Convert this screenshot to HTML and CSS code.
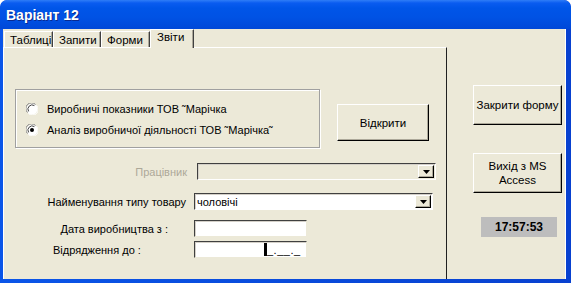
FILE: index.html
```html
<!DOCTYPE html>
<html>
<head>
<meta charset="utf-8">
<link rel="stylesheet" href="styles.css">
</head>
<body>
<div class="window">
  <div class="titlebar"><span class="title">Варіант 12</span></div>
  <div class="client">
    <div class="main">
      <div class="tabs">
        <div class="tab">Таблиці</div>
        <div class="tab">Запити</div>
        <div class="tab">Форми</div>
        <div class="tab active">Звіти</div>
      </div>
      <div class="panel">
        <div class="top-row">
          <div class="group">
            <div class="opt"><svg class="radio" width="12" height="12" viewBox="0 0 12 12"><circle cx="6" cy="6" r="5.5" fill="#fff"/><path d="M1.5 9.5A5.5 5.5 0 0 1 9.5 1.5" stroke="#808080" fill="none"/><path d="M2.6 8.4A4.2 4.2 0 0 1 8.4 2.6" stroke="#404040" fill="none"/><path d="M10.5 2.5A5.5 5.5 0 0 1 2.5 10.5" stroke="#fff" fill="none"/></svg><span>Виробничі показники ТОВ ˜Марічка</span></div>
            <div class="opt"><svg class="radio" width="12" height="12" viewBox="0 0 12 12"><circle cx="6" cy="6" r="5.5" fill="#fff"/><path d="M1.5 9.5A5.5 5.5 0 0 1 9.5 1.5" stroke="#808080" fill="none"/><path d="M2.6 8.4A4.2 4.2 0 0 1 8.4 2.6" stroke="#404040" fill="none"/><path d="M10.5 2.5A5.5 5.5 0 0 1 2.5 10.5" stroke="#fff" fill="none"/><circle cx="6" cy="6" r="2" fill="#000"/></svg><span>Аналіз виробничої діяльності ТОВ ˜Марічка˜</span></div>
          </div>
          <div class="btn open-btn">Відкрити</div>
        </div>
        <div class="row row-worker">
          <span class="label disabled">Працівник</span>
          <div class="combo combo-disabled"><span class="combo-text"></span><span class="drop"><svg width="7" height="4" viewBox="0 0 7 4"><path d="M0 0H7L3.5 4Z" fill="#000"/></svg></span></div>
        </div>
        <div class="row row-type">
          <span class="label">Найменування типу товару</span>
          <div class="combo combo-white"><span class="combo-text">чоловічі</span><span class="drop"><svg width="7" height="4" viewBox="0 0 7 4"><path d="M0 0H7L3.5 4Z" fill="#000"/></svg></span></div>
        </div>
        <div class="row row-date">
          <span class="label">Дата виробництва з :</span>
          <div class="textbox"></div>
        </div>
        <div class="row row-until">
          <span class="label">Відрядження до :</span>
          <div class="textbox mask"><span class="caret"></span><span class="masktext">_.__._</span></div>
        </div>
      </div>
    </div>
    <div class="side">
      <div class="btn side-btn close-btn">Закрити форму</div>
      <div class="btn side-btn exit-btn">Вихід з MS<br>Access</div>
      <div class="clock">17:57:53</div>
    </div>
  </div>
</div>
</body>
</html>
```
FILE: styles.css
```css
html, body {
  margin: 0;
  padding: 0;
  background: #fff;
}
body {
  font-family: "Liberation Sans", Arial, sans-serif;
  font-size: 11px;
  color: #000;
}
.window {
  width: 571px;
  height: 283px;
  box-sizing: border-box;
  background: linear-gradient(to right, #0a55e8 0, #0a55e8 3px, #0841d0 100%);
  padding: 0 5px 4px 3px;
  display: flex;
  flex-direction: column;
  border-radius: 7px 7px 0 0;
  overflow: hidden;
}
.titlebar {
  height: 29px;
  flex: none;
  margin: 0 -5px 0 -3px;
  background: linear-gradient(to bottom, #2f7df7 0, #0a5cf0 3px, #0055e8 8px, #0052e4 60%, #0048d8 100%);
  display: flex;
  align-items: center;
  padding-left: 6px;
  border-radius: 7px 7px 0 0;
}
.title {
  color: #fff;
  font-weight: bold;
  font-size: 14px;
  font-family: "Liberation Sans", sans-serif;
  text-shadow: 1px 1px 0 #0a2a90;
  margin-top: 1px;
}
.client {
  flex: 1;
  display: flex;
  background: #ece9d8;
}
.main {
  width: 444px;
  display: flex;
  flex-direction: column;
}
.tabs {
  height: 18px;
  display: flex;
  align-items: flex-end;
  padding-left: 1px;
  flex: none;
}
.tab {
  height: 16px;
  box-sizing: border-box;
  border-top: 1px solid #fff;
  border-left: 1px solid #fff;
  border-right: 1px solid #404040;
  box-shadow: inset -1px 0 #aca899;
  padding: 2px 4px 0 5px;
  line-height: 13px;
  font-size: 11.5px;
  background: #ece9d8;
  white-space: nowrap;
}
.tab:nth-child(1) { width: 49px; }
.tab:nth-child(2) { width: 48px; }
.tab:nth-child(3) { width: 49px; }
.tab.active {
  width: 44px;
  height: 19px;
  margin-bottom: -1px;
  position: relative;
  padding-top: 1px;
  padding-left: 6px;
}
.panel {
  flex: 1;
  box-sizing: border-box;
  border-top: 1px solid #fff;
  border-left: 1px solid #fff;
  border-right: 1px solid #202020;
  padding: 41px 0 0 11px;
  display: flex;
  flex-direction: column;
}
.top-row {
  display: flex;
  align-items: flex-start;
}
.group {
  width: 305px;
  height: 59px;
  box-sizing: border-box;
  border: 1px solid #a0a0a0;
  box-shadow: inset 1px 1px #fff, 1px 1px #fff;
  padding: 12px 0 0 10px;
  display: flex;
  flex-direction: column;
  gap: 7px;
}
.opt {
  display: flex;
  align-items: center;
  gap: 9px;
  height: 14px;
  white-space: nowrap;
}
.radio { flex: none; }
.btn {
  box-sizing: border-box;
  background: #ece9d8;
  border-top: 1px solid #fff;
  border-left: 1px solid #fff;
  border-right: 1px solid #000;
  border-bottom: 1px solid #000;
  box-shadow: inset -1px -1px #aca899;
  display: flex;
  align-items: center;
  justify-content: center;
  text-align: center;
  line-height: 14px;
  font-size: 11.5px;
}
.open-btn {
  width: 92px;
  height: 37px;
  margin: 15px 0 0 17px;
}
.row {
  display: flex;
  align-items: center;
  height: 17px;
}
.label {
  white-space: nowrap;
  text-align: right;
  box-sizing: border-box;
}
.disabled {
  color: #aca899;
}
.row-worker { margin-top: 15px; }
.row-worker .label { width: 172px; }
.row-worker .combo { margin-left: 10px; width: 239px; }
.row-type { margin-top: 13px; }
.row-type .label { width: 171px; }
.row-type .combo { margin-left: 8px; width: 239px; }
.row-date { margin-top: 10px; }
.row-date .label { width: 153px; }
.row-date .textbox { margin-left: 26px; }
.row-until { margin-top: 4px; }
.row-until .label { width: 179px; text-align: left; padding-left: 38px; }
.combo {
  height: 17px;
  box-sizing: border-box;
  border-top: 1px solid #404040;
  border-left: 1px solid #404040;
  border-right: 1px solid #fff;
  border-bottom: 1px solid #fff;
  box-shadow: 1px 1px 0 #d4d0c8 inset;
  display: flex;
  align-items: center;
  padding: 0 1px 0 2px;
}
.combo-disabled { background: #ece9d8; }
.combo-white { background: #fff; }
.combo-text {
  flex: 1;
  white-space: nowrap;
}
.drop {
  width: 16px;
  height: 13px;
  box-sizing: border-box;
  background: #ece9d8;
  border-top: 1px solid #fff;
  border-left: 1px solid #fff;
  border-right: 1px solid #000;
  border-bottom: 1px solid #000;
  box-shadow: inset -1px -1px #aca899;
  display: flex;
  align-items: center;
  justify-content: center;
}
.textbox {
  width: 113px;
  height: 17px;
  box-sizing: border-box;
  background: #fff;
  border-top: 1px solid #404040;
  border-left: 1px solid #404040;
  border-right: 1px solid #ece9d8;
  border-bottom: 1px solid #ece9d8;
  box-shadow: inset 1px 1px #d4d0c8;
  display: flex;
  align-items: flex-end;
}
.mask { padding-left: 69px; padding-bottom: 1px; }
.caret {
  width: 3px;
  height: 13px;
  background: #000;
}
.masktext {
  line-height: 12px;
  letter-spacing: 0.5px;
}
.side {
  flex: 1;
  display: flex;
  flex-direction: column;
  align-items: flex-start;
  padding-left: 26px;
  padding-top: 56px;
  box-shadow: inset -1px 0 #fff;
}
.side-btn {
  width: 89px;
  height: 40px;
}
.exit-btn { margin-top: 28px; }
.clock {
  margin-top: 24px;
  margin-left: 8px;
  width: 76px;
  height: 20px;
  background: #bdbdbd;
  font-weight: bold;
  font-size: 12px;
  display: flex;
  align-items: center;
  justify-content: center;
}
```
